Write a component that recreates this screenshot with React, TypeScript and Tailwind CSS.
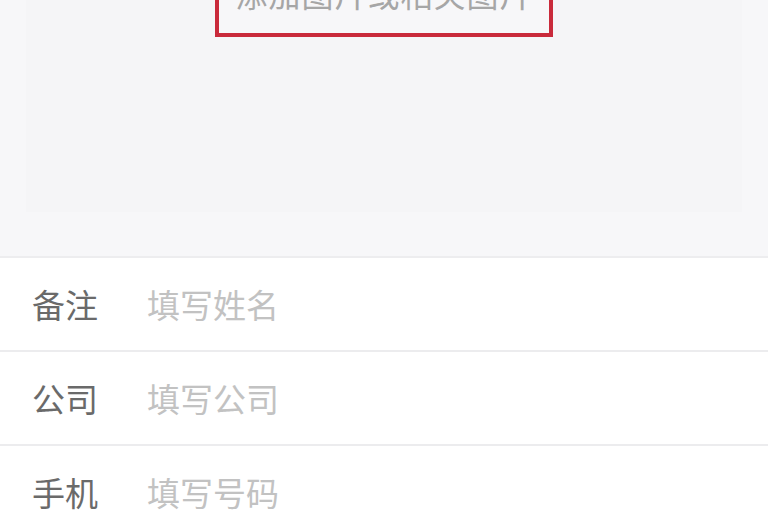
export default function App() {
  const font = { fontFamily: '"Noto Sans CJK SC", "Noto Sans", sans-serif' }
  const rows = [
    { label: '备注', placeholder: '填写姓名' },
    { label: '公司', placeholder: '填写公司' },
    { label: '手机', placeholder: '填写号码' },
  ]
  return (
    <div className="h-[510px] w-full overflow-hidden bg-white" style={font}>
      <div className="h-[258px] bg-[#f7f7f9] px-[26px] border-b-2 border-[#ededef]">
        <div className="flex h-[212px] flex-col items-center bg-[#f5f5f7]">
          <div className="mt-[-34px] flex h-[71px] w-[338px] shrink-0 items-start justify-center border-[4px] border-[#c92a3b] bg-[#f7f7f9] pt-[3px]">
            <span className="text-[32px] leading-[40px] text-[#a6a6a6] tracking-[1px]">添加图片或相关图片</span>
          </div>
        </div>
      </div>
      {rows.map((r) => (
        <div key={r.label} className="flex h-[94px] items-center border-b-2 border-[#ececee] px-[32px]">
          <span className="w-[115px] text-[33px] leading-none text-[#6a6a6a]">{r.label}</span>
          <span className="text-[33px] leading-none text-[#c2c2c2]">{r.placeholder}</span>
        </div>
      ))}
    </div>
  )
}
